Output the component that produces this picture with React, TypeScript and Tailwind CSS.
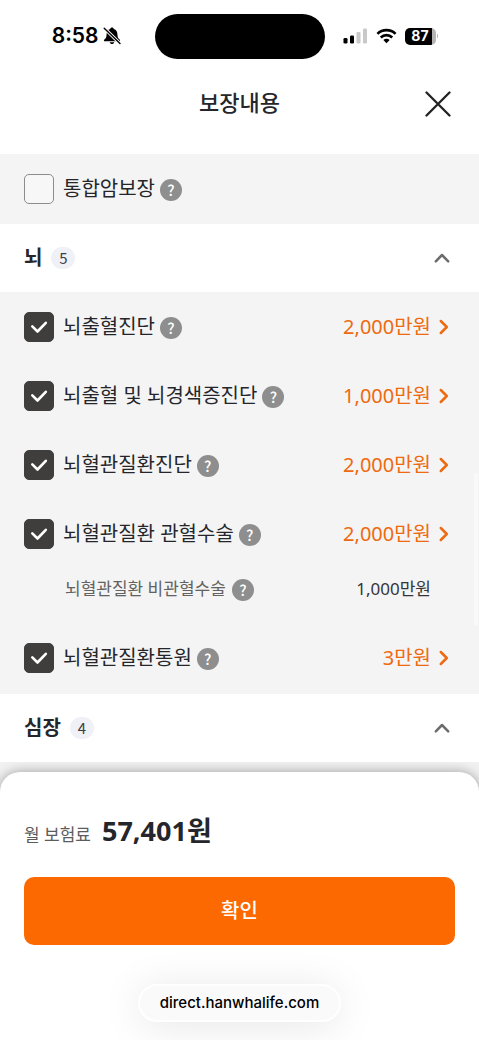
import { useState } from "react";

const HANGUL = "font-['Noto_Sans','Noto_Sans_CJK_KR',sans-serif]";

type Coverage = {
  id: string;
  name: string;
  amount?: string;
  checked: boolean;
  sub?: { name: string; amount: string };
};

const brain: Coverage[] = [
  { id: "hemorrhage", name: "뇌출혈진단", amount: "2,000만원", checked: true },
  { id: "infarction", name: "뇌출혈 및 뇌경색증진단", amount: "1,000만원", checked: true },
  { id: "vascular", name: "뇌혈관질환진단", amount: "2,000만원", checked: true },
  {
    id: "surgery",
    name: "뇌혈관질환 관혈수술",
    amount: "2,000만원",
    checked: true,
    sub: { name: "뇌혈관질환 비관혈수술", amount: "1,000만원" },
  },
  { id: "outpatient", name: "뇌혈관질환통원", amount: "3만원", checked: true },
];

function StatusBar() {
  return (
    <div className="grid h-[72px] grid-cols-[1fr_170px_1fr] items-center font-['Inter',sans-serif]">
      <div className="flex items-center justify-end gap-1 pr-[34px]">
        <span className="text-[21px] leading-6 font-semibold text-black">8:58</span>
        <svg className="h-[18px] w-[18px]" viewBox="0 0 18 18" aria-hidden="true">
          <path
            d="M9 .6c-1 0-1.700.7-1.800 1.500C4.700 3 3.600 4.900 3.600 7.200c0 3.200-1 4.300-2.200 5.300-.9.8-.5 1.800.5 1.800h14.200c1 0 1.400-1 .5-1.800-1.200-1-2.200-2.100-2.200-5.300 0-2.300-1.100-4.200-3.600-5.100C10.700 1.300 10 .6 9 .6zM6.700 15.300h4.600c-.3 1.100-1.200 1.800-2.300 1.800s-2-.7-2.300-1.800z"
            fill="#000"
          />
          <path d="M1.200 1.200 17 16.600" stroke="#fff" strokeWidth="3.200" />
          <path d="M1.200 1.200 17 16.600" stroke="#000" strokeWidth="1.400" strokeLinecap="round" />
        </svg>
      </div>
      <div className="h-[45px] rounded-full bg-black" />
      <div className="flex items-center gap-2 pl-[18px]">
        <svg className="h-4 w-[25px]" viewBox="0 0 25 16" aria-hidden="true">
          <rect x="0.500" y="10" width="4" height="5.500" rx="1.300" fill="#000" />
          <rect x="7" y="7.500" width="4" height="8" rx="1.300" fill="#000" />
          <rect x="13.500" y="4" width="4" height="11.500" rx="1.300" fill="#c9c9c9" />
          <rect x="20" y="0.500" width="4" height="15" rx="1.300" fill="#c9c9c9" />
        </svg>
        <svg className="h-4 w-[21px]" viewBox="0 0 22 16" aria-hidden="true">
          <g fill="none" stroke="#000" strokeWidth="2.800">
            <path d="M1.500 5.800a13.600 13.600 0 0 1 19 0" />
            <path d="M5 9.600a8.600 8.600 0 0 1 12 0" />
          </g>
          <path d="M7.700 12.300a4.700 4.700 0 0 1 6.600 0L11 15.700z" fill="#000" />
        </svg>
        <div className="flex items-center gap-px">
          <div className="flex h-[17px] w-[31px] items-center justify-center rounded-[5px] bg-[linear-gradient(90deg,#000_87%,#b5b5b5_87%)] text-[14px] leading-4 font-bold text-white">
            87
          </div>
          <div className="h-1 w-px rounded-r bg-[#b5b5b5]" />
        </div>
      </div>
    </div>
  );
}

function HelpButton({ name }: { name: string }) {
  return (
    <button
      type="button"
      aria-label={`${name} 도움말`}
      className="mt-[2px] flex h-[22px] w-[22px] shrink-0 items-center justify-center rounded-full bg-[#8e8e8e] font-['Noto_Sans_CJK_KR',sans-serif] text-[15px] leading-5 font-medium text-white"
    >
      ?
    </button>
  );
}

function CheckBox({ id, initial }: { id: string; initial: boolean }) {
  return (
    <span className="grid h-[30px] w-[30px] shrink-0 place-items-center">
      <input
        id={id}
        type="checkbox"
        defaultChecked={initial}
        className="peer col-start-1 row-start-1 h-[30px] w-[30px] appearance-none rounded-[5px] border border-[#8c8c8c] bg-[#f7f7f7] checked:border-[#403e3d] checked:bg-[#403e3d]"
      />
      <svg
        className="pointer-events-none invisible col-start-1 row-start-1 h-[30px] w-[30px] peer-checked:visible"
        viewBox="0 0 30 30"
        aria-hidden="true"
      >
        <path d="m8.300 14.300 5.200 5.200 8.300-8.700" fill="none" stroke="#fff" strokeWidth="2.600" strokeLinecap="round" strokeLinejoin="round" />
      </svg>
    </span>
  );
}

function CoverageRow({ item }: { item: Coverage }) {
  return (
    <li>
      <div className="flex h-[69px] items-center justify-between">
        <div className="flex items-center">
          <CheckBox id={item.id} initial={item.checked} />
          <label htmlFor={item.id} className="pr-[5px] pl-[9px] text-[20px] leading-7 text-[#25262b]">
            {item.name}
          </label>
          <HelpButton name={item.name} />
        </div>
        {item.amount && (
          <button type="button" className="flex items-center gap-2 pr-[6px] text-[20px] leading-7 text-[#ee6a10]">
            {item.amount}
            <svg className="h-4 w-[10px]" viewBox="0 0 10 16" aria-hidden="true">
              <path d="m1.800 2 6 6-6 6" fill="none" stroke="currentColor" strokeWidth="2.500" strokeLinecap="round" strokeLinejoin="round" />
            </svg>
          </button>
        )}
      </div>
      {item.sub && (
        <div className="flex h-[55px] items-start justify-between pt-[9px] pr-6 pl-[41px] text-[17px] leading-6">
          <div className="flex items-center gap-[6px] text-[#626262]">
            <span>{item.sub.name}</span>
            <HelpButton name={item.sub.name} />
          </div>
          <span className="text-[#34353a]">{item.sub.amount}</span>
        </div>
      )}
    </li>
  );
}

function SectionHeader({ title, count, open, onToggle }: { title: string; count: number; open: boolean; onToggle: () => void }) {
  return (
    <h2>
      <button type="button" aria-expanded={open} onClick={onToggle} className="flex h-[68px] w-full items-center justify-between bg-white pr-7 pl-6">
        <span className="flex items-center gap-[9px]">
          <span className="text-[20px] leading-7 font-bold text-[#25262b]">{title}</span>
          <span className="flex h-[22px] min-w-6 items-center justify-center rounded-full bg-[#f0f1f6] font-['Noto_Sans_CJK_KR',sans-serif] text-[15px] leading-5 text-[#3c3d42]">
            {count}
          </span>
        </span>
        <svg className={open ? "h-4 w-[18px]" : "h-4 w-[18px] rotate-180"} viewBox="0 0 18 16" aria-hidden="true">
          <path d="m2.800 11.300 6.200-6.300 6.200 6.300" fill="none" stroke="#6c6c6c" strokeWidth="2.500" strokeLinecap="round" strokeLinejoin="round" />
        </svg>
      </button>
    </h2>
  );
}

export default function App() {
  const [brainOpen, setBrainOpen] = useState(true);
  const [heartOpen, setHeartOpen] = useState(true);

  return (
    <div lang="ko" className={`relative flex min-h-screen flex-col bg-white ${HANGUL}`}>
      <StatusBar />
      <header className="grid h-[82px] grid-cols-[1fr_auto_1fr] items-start px-6 pt-[14px]">
        <h1 className="col-start-2 text-[22px] leading-8 font-medium text-[#25262b]">보장내용</h1>
        <button type="button" aria-label="닫기" className="flex h-9 w-[34px] items-center justify-center justify-self-end">
          <svg className="h-[26px] w-[26px]" viewBox="0 0 26 26" aria-hidden="true">
            <path d="m1.500 1.500 23 23m0-23-23 23" stroke="#222" strokeWidth="2.300" strokeLinecap="round" />
          </svg>
        </button>
      </header>

      <main>
        <ul className="bg-[#f4f4f4] px-6 pb-px">
          <CoverageRow item={{ id: "cancer", name: "통합암보장", checked: false }} />
        </ul>
        <SectionHeader title="뇌" count={5} open={brainOpen} onToggle={() => setBrainOpen(!brainOpen)} />
        {brainOpen && (
          <ul className="bg-[#f4f4f4] px-6 pb-[2px]">
            {brain.map((item) => (
              <CoverageRow key={item.id} item={item} />
            ))}
          </ul>
        )}
        <SectionHeader title="심장" count={4} open={heartOpen} onToggle={() => setHeartOpen(!heartOpen)} />
      </main>
      <div className="absolute top-[473px] right-px h-[152px] w-1 rounded-full bg-[#f9f9f9]" />

      <footer className="flex grow flex-col overflow-hidden bg-[#f1f1f1] pt-[10px]">
        <div className="flex grow flex-col rounded-t-[20px] bg-white px-6 pt-[41px] shadow-[0_0_12px_rgba(0,0,0,0.35)]">
          <p className="flex items-baseline gap-[11px]">
            <span className="text-[17px] leading-6 text-[#5c5c5c]">월 보험료</span>
            <strong className="text-[27px] leading-9 font-bold text-[#25262b]">57,401원</strong>
          </p>
          <button type="button" className="mt-7 h-[68px] w-full rounded-[10px] bg-[#fb6900] text-[20px] leading-7 font-medium text-white">
            확인
          </button>
          <div className="flex justify-center pt-[39px]">
            <a
              href="https://direct.hanwhalife.com"
              className="flex h-[38px] items-center rounded-full border-2 border-white bg-[#fafafa] px-5 font-['Inter',sans-serif] text-[15px] leading-5 font-medium text-black shadow-[0_4px_40px_rgba(0,0,0,0.1)]"
            >
              direct.hanwhalife.com
            </a>
          </div>
        </div>
      </footer>
    </div>
  );
}
